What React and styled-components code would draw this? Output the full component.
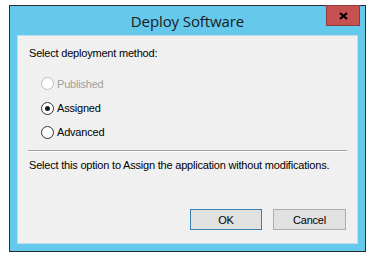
import React from "react";
import styled, { createGlobalStyle } from "styled-components";

const colors = {
    frame: "#64c9ea",
    edge: "#2c2c2c",
    client: "#f0f0f0",
    text: "#000000",
    disabled: "#a0a0a0",
    close: "#c75050",
    closeEdge: "#8b3c3c",
    button: "#e1e1e1",
    buttonEdge: "#adadad",
    defaultEdge: "#3c7fb1",
};

const fonts = {
    ui: "\"Liberation Sans\", Arial, sans-serif",
    title: "\"Open Sans\", \"Noto Sans\", sans-serif",
};

const GlobalStyle = createGlobalStyle`
    html, body {
        margin: 0;
        padding: 0;
        background: #ffffff;
    }
    body {
        font-family: ${fonts.ui};
        font-size: 11px;
        letter-spacing: -0.2px;
        color: ${colors.text};
    }
`;

const Window = styled.div`
    width: 357px;
    height: 247px;
    box-sizing: border-box;
    margin: 5px 0 0 9px;
    border: 1px solid ${colors.edge};
    background: ${colors.frame};
    padding: 0 7px 7px 7px;
    display: flex;
    flex-direction: column;
`;

const TitleBar = styled.div`
    height: 29px;
    display: grid;
    grid-template-columns: 1fr auto 1fr;
    align-items: start;
    margin: 0 -7px;
`;

const Title = styled.div`
    grid-column: 2;
    font-family: ${fonts.title};
    font-size: 15px;
    letter-spacing: -0.1px;
    line-height: 30px;
    color: #1b1b1b;
`;

const CloseButton = styled.div`
    grid-column: 3;
    justify-self: end;
    width: 34px;
    height: 21px;
    box-sizing: border-box;
    margin: -1px 5px 0 0;
    background: ${colors.close};
    border: 1px solid ${colors.closeEdge};
    display: flex;
    align-items: center;
    justify-content: center;
`;

const Client = styled.div`
    flex: 1;
    background: ${colors.client};
    border: 1px solid #c3dbe6;
    padding: 0 10px 13px 10px;
    display: flex;
    flex-direction: column;
`;

const Label = styled.div`
    line-height: 13px;
    padding-left: 1px;
    margin-top: ${p => p.top || 0}px;
`;

const RadioList = styled.div`
    margin-top: 11px;
    display: flex;
    flex-direction: column;
`;

const RadioRow = styled.div`
    height: ${p => p.h || 24}px;
    display: flex;
    align-items: center;
    gap: 3px;
    padding-left: 13px;
    color: ${p => (p.disabled ? colors.disabled : colors.text)};
`;

const RadioCircle = styled.span`
    width: 13px;
    height: 13px;
    box-sizing: border-box;
    border-radius: 50%;
    border: 1px solid ${p => (p.disabled ? "#bcbcbc" : "#333333")};
    background: #ffffff;
    display: flex;
    align-items: center;
    justify-content: center;
    &::after {
        content: "";
        width: 5px;
        height: 5px;
        border-radius: 50%;
        background: #1a1a1a;
        display: ${p => (p.checked ? "block" : "none")};
    }
`;

const Separator = styled.div`
    margin-top: 6px;
    height: 1px;
    background: #a0a0a0;
    border-bottom: 1px solid #ffffff;
`;

const ButtonRow = styled.div`
    margin-top: auto;
    display: flex;
    justify-content: flex-end;
    gap: 11px;
    padding-right: 1px;
`;

const Button = styled.div`
    width: ${p => p.w}px;
    height: 21px;
    box-sizing: border-box;
    background: ${colors.button};
    border: 1px solid ${p => (p.primary ? colors.defaultEdge : colors.buttonEdge)};
    display: flex;
    align-items: center;
    justify-content: center;
    font-size: 11px;
`;

const options = [
    { name: "Published", disabled: true, h: 25 },
    { name: "Assigned", checked: true, h: 24 },
    { name: "Advanced", h: 24 },
];

export default function App() {
    return (
        <>
            <GlobalStyle />
            <Window>
                <TitleBar>
                    <Title>Deploy Software</Title>
                    <CloseButton>
                        <svg width="9" height="8" viewBox="0 0 9 8">
                            <path d="M1 1 L8 7 M8 1 L1 7" stroke="#000" strokeWidth="2.2" />
                        </svg>
                    </CloseButton>
                </TitleBar>
                <Client>
                    <Label top={11}>Select deployment method:</Label>
                    <RadioList>
                        {options.map((o, i) => (
                            <RadioRow key={i} h={o.h} disabled={o.disabled}>
                                <RadioCircle disabled={o.disabled} checked={o.checked} />
                                {o.name}
                            </RadioRow>
                        ))}
                    </RadioList>
                    <Separator />
                    <Label top={7}>Select this option to Assign the application without modifications.</Label>
                    <ButtonRow>
                        <Button primary w={72}>OK</Button>
                        <Button w={73}>Cancel</Button>
                    </ButtonRow>
                </Client>
            </Window>
        </>
    );
}
